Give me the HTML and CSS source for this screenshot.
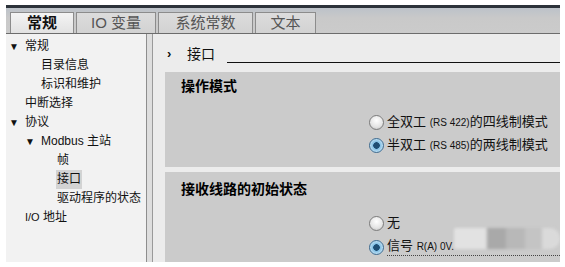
FILE: index.html
```html
<!DOCTYPE html>
<html lang="zh">
<head>
    <meta charset="UTF-8">
    <title>Modbus 接口</title>
    <link rel="stylesheet" href="styles.css">
</head>
<body>
    <div class="window">
        <div class="tabbar">
            <div class="tab active">常规</div>
            <div class="tab tab-io">IO 变量</div>
            <div class="tab tab-const">系统常数</div>
            <div class="tab tab-text">文本</div>
        </div>

        <div class="main">
            <div class="tree">
                <div class="node"><span class="arrow">▼</span>常规</div>
                <div class="node lv1"><span class="arrow"></span>目录信息</div>
                <div class="node lv1"><span class="arrow"></span>标识和维护</div>
                <div class="node"><span class="arrow"></span>中断选择</div>
                <div class="node"><span class="arrow">▼</span>协议</div>
                <div class="node lv1"><span class="arrow">▼</span>Modbus 主站</div>
                <div class="node lv2"><span class="arrow"></span>帧</div>
                <div class="node lv2"><span class="arrow"></span><span class="selected">接口</span></div>
                <div class="node lv2"><span class="arrow"></span>驱动程序的状态</div>
                <div class="node"><span class="arrow"></span><span class="latin">I/O</span>&nbsp;地址</div>
            </div>
            <div class="splitter"></div>

            <div class="content">
                <div class="crumb">
                    <span class="chev">›</span>
                    <span class="crumb-title">接口</span>
                    <span class="rule"></span>
                </div>

                <section class="group group-mode">
                    <h3>操作模式</h3>
                    <div class="options">
                        <div class="option"><span class="radio"></span><span class="label">全双工 <small>(RS 422)</small>的四线制模式</span></div>
                        <div class="option"><span class="radio checked"></span><span class="label">半双工 <small>(RS 485)</small>的两线制模式</span></div>
                    </div>
                </section>

                <section class="group group-line">
                    <h3>接收线路的初始状态</h3>
                    <div class="options">
                        <div class="option"><span class="radio"></span><span class="label">无</span></div>
                        <div class="option"><span class="radio checked"></span><span class="label focus">信号 <small>R(A) 0V.</small></span></div>
                    </div>
                    <div class="blur"></div>
                </section>
            </div>
        </div>
    </div>
</body>
</html>
```

FILE: styles.css
```css
body {
    margin: 0;
    background: #fff;
    font-family: "Liberation Sans", "Noto Sans CJK SC", sans-serif;
    color: #111;
}
.window {
    margin: 5px 0 0 6px;
    width: 554px;
}
.tabbar {
    height: 25px;
    border-top: 3px solid #2c323a;
    border-bottom: 1px solid #6c6c6c;
    background: linear-gradient(#bcc2c9, #c9c9c9 40%, #cbcbcb);
    display: flex;
    align-items: flex-end;
    gap: 2px;
    padding-left: 4px;
}
.tab {
    height: 20px;
    width: 62px;
    border: 1px solid #8c8c8c;
    border-bottom: none;
    background: linear-gradient(#dcdcdc, #d2d2d2);
    color: #555;
    font-size: 15px;
    line-height: 20px;
    text-align: center;
}
.tab.active {
    background: linear-gradient(#f4f4f4, #e2e2e2);
    color: #111;
    font-weight: bold;
}
.tab-io { width: 78px; }
.tab-const { width: 93px; }
.tab-text { width: 59px; }

.main {
    display: flex;
    height: 228px;
}
.tree {
    width: 140px;
    padding-top: 3px;
    background: #f2f2f2;
    font-size: 12px;
}
.node {
    height: 19px;
    line-height: 19px;
    display: flex;
    align-items: center;
    white-space: nowrap;
}
.node.lv1 { padding-left: 16px; }
.node.lv2 { padding-left: 32px; }
.arrow {
    width: 19px;
    flex: none;
    font-size: 10px;
    text-align: center;
    padding-right: 3px;
    box-sizing: border-box;
}
.selected {
    background: #d3d3d3;
    padding: 0 1px;
    margin-left: -1px;
}
.latin { font-size: 11px; }
.splitter {
    width: 5px;
    border-left: 1px solid #8e8e8e;
    border-right: 1px solid #9a9a9a;
    background: #dedede;
}
.content {
    flex: 1;
    background: #ececec;
    padding-left: 12px;
}
.crumb {
    height: 38px;
    display: flex;
    align-items: center;
}
.chev {
    width: 20px;
    margin-left: 2px;
    font-size: 13px;
    font-weight: bold;
}
.crumb-title {
    font-size: 14px;
}
.rule {
    flex: 1;
    align-self: flex-start;
    margin: 28px 0 0 12px;
    border-top: 1px solid #111;
}
.group {
    background: #cbcbcb;
    position: relative;
    overflow: hidden;
}
.group h3 {
    margin: 0;
    padding-left: 16px;
    height: 28px;
    line-height: 28px;
    font-size: 14px;
    font-weight: bold;
    color: #000;
}
.group-mode {
    height: 95px;
    margin-bottom: 5px;
}
.group-mode .options { margin-top: 11px; }
.group-line {
    height: 91px;
}
.group-line h3 { padding-top: 3px; }
.group-line .options { margin-top: 8px; }
.group-line .option { height: 24px; }
.options {
    padding-left: 204px;
}
.option {
    height: 23px;
    display: flex;
    align-items: center;
    font-size: 13px;
}
.option small { font-size: 10px; }
.radio {
    width: 13px;
    height: 13px;
    flex: none;
    border: 1px solid #7c7c7c;
    border-radius: 50%;
    background: radial-gradient(circle at 50% 35%, #fff, #e4e4e4 60%, #b9b9b9);
    margin-right: 3px;
}
.radio.checked {
    border-color: #3b6a90;
    background: radial-gradient(circle, #1f4e74 0 3px, #7fbde3 3.5px, #cfe8f7 80%);
}
.label {
    line-height: 16px;
    white-space: nowrap;
}
.label.focus {
    flex: 1;
    border-bottom: 1px dotted #444;
}
.blur {
    position: absolute;
    left: 289px;
    top: 56px;
    width: 106px;
    height: 21px;
    background: linear-gradient(90deg, #e2e2e2 0 30%, #a9a9a9 32% 48%, #b8b8b8 50% 66%, #c4c4c4 68% 82%, #dadada 84%);
    border-radius: 2px 10px 10px 2px;
    filter: blur(1.5px);
}
```
